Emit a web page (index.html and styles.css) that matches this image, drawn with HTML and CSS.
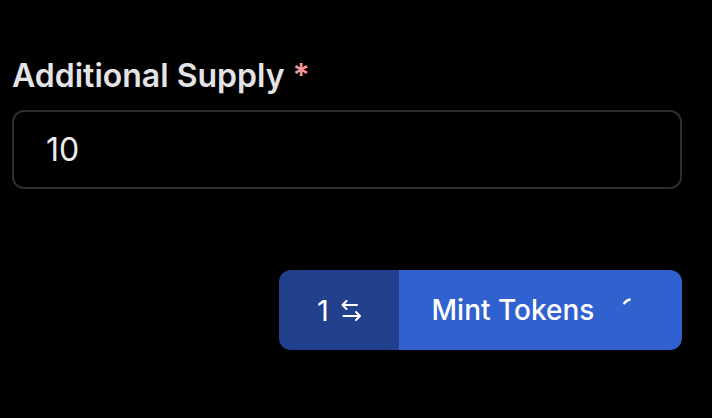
FILE: index.html
```html
<html>
	<head>
		<link rel="stylesheet" href="styles.css">
	</head>
	<body>
		<form class="mint">
			<label class="label" for="supply">Additional Supply <span class="req">*</span></label>
			<input class="field" id="supply" type="text" value="10"/>
			<div class="actions">
				<div class="btngroup">
					<button type="button" class="chain">1
						<svg class="swap" width="20" height="22" viewBox="0 0 20 22">
							<path d="M16 6H1.5M5.5 2L1.5 6l4 4M2.5 17H19M15 13l4 4-4 4" fill="none" stroke="#fff" stroke-width="2" stroke-linecap="round" stroke-linejoin="round"/>
						</svg>
					</button>
					<button type="submit" class="submit">Mint Tokens
						<svg class="spin" width="24" height="24" viewBox="0 0 24 24">
							<path d="M3.3 5.2A11 11 0 0 1 8.6 1.5" fill="none" stroke="#fff" stroke-width="2.5" stroke-linecap="round"/>
						</svg>
					</button>
				</div>
			</div>
		</form>
	</body>
</html>
```

FILE: styles.css
```css
body {
	background-color: #000;
	margin: 0;
	padding: 56px 30px 0 12px;
	font-family: Inter, "Noto Sans", sans-serif;
}
.mint {
	display: flex;
	flex-direction: column;
	margin: 0;
}
.label {
	font-size: 32px;
	line-height: 40px;
	font-weight: 600;
	color: #e4e4e7;
	margin-bottom: 14px;
}
.req { color: #f39a9a }
.field {
	height: 79px;
	border: 2px solid #2e2e30;
	border-radius: 12px;
	background: #000;
	color: #ececec;
	font-family: inherit;
	font-size: 32px;
	padding: 0 32px;
	outline: none;
}
.actions {
	display: flex;
	justify-content: flex-end;
	margin-top: 81px;
}
.btngroup {
	display: flex;
	height: 80px;
	border-radius: 12px;
	overflow: hidden;
}
.btngroup button {
	border: none;
	color: #fff;
	font-family: inherit;
	display: flex;
	align-items: center;
	justify-content: center;
}
.chain {
	width: 120px;
	background-color: #22408b;
	font-size: 29px;
	gap: 12px;
}
.submit {
	width: 283px;
	background-color: #3160cf;
	font-size: 28px;
	font-weight: 500;
	gap: 27px;
	padding-left: 2px;
}
```
